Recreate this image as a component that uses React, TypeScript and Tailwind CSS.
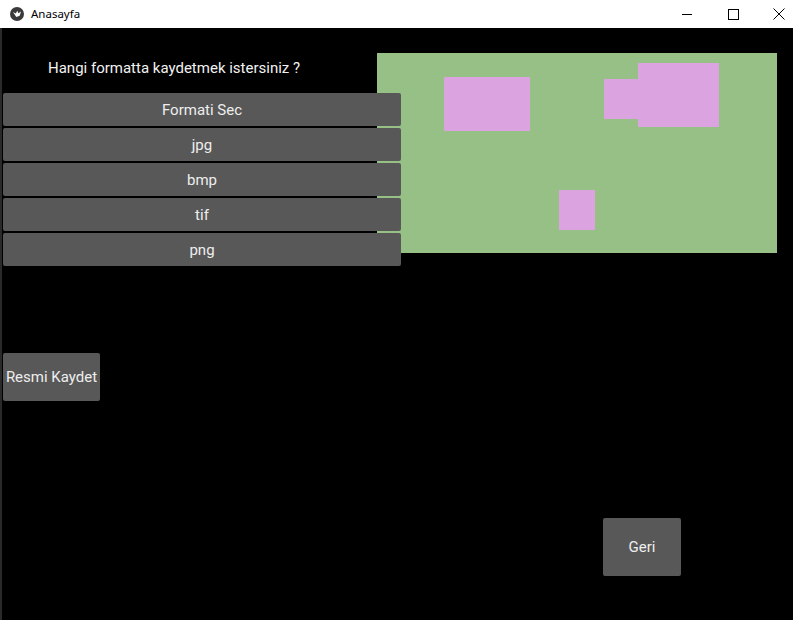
import React from "react";

const options = ["Formati Sec", "jpg", "bmp", "tif", "png"];

export default function App() {
  return (
    <div className="w-[793px] h-[620px] bg-black flex flex-col overflow-hidden" style={{ fontFamily: "Roboto, sans-serif" }}>
      {/* Title bar */}
      <div className="h-[28px] bg-white flex items-center shrink-0 relative">
        <div className="ml-[10px] w-[14px] h-[14px]">
          <svg width="14" height="14" viewBox="0 0 14 14">
            <circle cx="7" cy="7" r="7" fill="#3a3a3a" />
            <path d="M3 5 L5.8 6.4 L7.3 3.8 L8.4 6.3 L11 4.4 L9.7 8.7 L6.3 10 Z" fill="#ffffff" />
          </svg>
        </div>
        <span className="ml-[7px] text-[11.5px] text-black leading-none" style={{ fontFamily: '"Noto Sans", sans-serif' }}>Anasayfa</span>
        <div className="ml-auto mr-[-9px] flex items-center h-full">
          <div className="w-[46px] h-full flex items-center justify-center">
            <svg width="11" height="11" viewBox="0 0 11 11"><line x1="0" y1="5.5" x2="10" y2="5.5" stroke="#000" strokeWidth="1" /></svg>
          </div>
          <div className="w-[46px] h-full flex items-center justify-center">
            <svg width="11" height="11" viewBox="0 0 11 11"><rect x="0.5" y="0.5" width="10" height="10" fill="none" stroke="#000" strokeWidth="1" /></svg>
          </div>
          <div className="w-[46px] h-full flex items-center justify-center">
            <svg width="12" height="12" viewBox="0 0 12 12"><path d="M0.5 0.5 L11.5 11.5 M11.5 0.5 L0.5 11.5" stroke="#000" strokeWidth="1" /></svg>
          </div>
        </div>
      </div>

      {/* Content */}
      <div className="flex-1 border-l-2 border-[#2a2a2a] pl-[1px]">
        <div className="flex items-start">
          <div className="w-[398px] relative z-10 flex flex-col">
            <div className="mt-[30px] mb-[15px] h-[20px] leading-[20px] pl-[45px] text-[15px] text-[#f2f2f2]">
              Hangi formatta kaydetmek istersiniz ?
            </div>
            {options.map((o) => (
              <div key={o} className="h-[33px] mb-[2px] pt-[2px] rounded-[2px] bg-[#585858] flex items-center justify-center text-[15px] text-[#eeeeee]">
                {o}
              </div>
            ))}
            <div className="mt-[85px] w-[97px] h-[48px] pt-[1px] rounded-[2px] bg-[#585858] flex items-center justify-center text-[15px] text-[#eeeeee]">
              Resmi Kaydet
            </div>
          </div>
          <div className="ml-[-24px] mt-[25px] w-[400px] h-[200px] bg-[#96c086] relative shrink-0">
            <div className="absolute left-[67px] top-[24px] w-[86px] h-[54px] bg-[#dca3e1]" />
            <div className="absolute left-[227px] top-[26px] w-[34px] h-[40px] bg-[#dca3e1]" />
            <div className="absolute left-[261px] top-[10px] w-[81px] h-[64px] bg-[#dca3e1]" />
            <div className="absolute left-[182px] top-[137px] w-[36px] h-[40px] bg-[#dca3e1]" />
          </div>
        </div>
        <div className="mt-[117px] ml-[600px] w-[78px] h-[58px] rounded-[2px] bg-[#585858] flex items-center justify-center text-[15px] text-[#eeeeee]">
          Geri
        </div>
      </div>
    </div>
  );
}
